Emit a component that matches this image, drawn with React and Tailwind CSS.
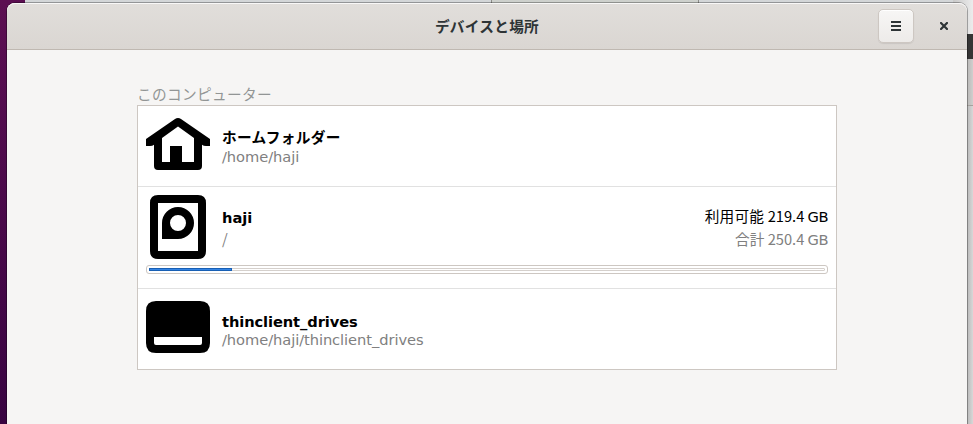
const latin = "font-['DejaVu_Sans','Noto_Sans_CJK_JP',sans-serif]";
const cjk = "font-['Noto_Sans_CJK_JP',sans-serif]";

function HomeIcon() {
  return (
    <svg width="64" height="64" viewBox="0 0 64 64" className="shrink-0">
      <path
        fillRule="evenodd"
        d="M32 4c-1.100 0-2 .3-3 1L0 25v7h4q2.500 0 4-1.200V52q0 4 4 4h40q4 0 4-4V30.800q1.500 1.200 4 1.200h4v-7L35 5c-1-.7-1.900-1-3-1zM32 12.600L48 24v24H36V32H24v16h-8V24z"
      />
    </svg>
  );
}

function DiskIcon() {
  return (
    <svg width="64" height="64" viewBox="0 0 64 64" className="shrink-0">
      <path
        fillRule="evenodd"
        d="M12 0h40q8 0 8 8v48q0 8-8 8H12q-8 0-8-8V8q0-8 8-8zM12 8v48h40V8z"
      />
      <path
        fillRule="evenodd"
        d="M32 12a16 16 0 0 1 0 32H16V28a16 16 0 0 1 16-16zM32 20a8 8 0 1 0 0 16a8 8 0 0 0 0-16z"
      />
    </svg>
  );
}

function DriveIcon() {
  return (
    <svg width="64" height="64" viewBox="0 0 64 64" className="shrink-0">
      <path
        fillRule="evenodd"
        d="M10 4h44q10 0 10 10v32q0 10-10 10H10Q0 56 0 46V14Q0 4 10 4zM8 40v6q0 2 2 2h44q2 0 2-2v-6z"
      />
    </svg>
  );
}

function Backdrop() {
  return (
    <div className="absolute inset-0">
      <div className="absolute inset-y-0 left-0 w-[25px] bg-linear-to-b from-[#5c0f52] to-[#380441]" />
      <div className="absolute top-0 left-[25px] h-[3px] w-[466px] bg-[#d3d6d8]" />
      <div className="absolute top-0 left-[491px] h-[3px] w-[208px] border-x border-[#8d8d89] bg-[#cdd0cc]" />
      <div className="absolute top-0 left-[699px] h-[3px] w-[274px] bg-[#d3d6d8]" />
      <div className="absolute top-0 right-0 h-[34px] w-[20px] bg-linear-to-r from-[#c8c8c8] to-[#ececec]" />
      <div className="absolute top-[34px] right-0 h-[25px] w-[6px] bg-[#353535]" />
      <div className="absolute top-[59px] right-0 h-[46px] w-[6px] bg-linear-to-r from-[#b8b7b6] to-[#d0cfce]" />
      <div className="absolute top-[105px] right-0 h-px w-[6px] bg-[#a5a19d]" />
      <div className="absolute top-[106px] right-0 bottom-0 w-[6px] bg-linear-to-r from-[#b8b8b8] to-[#d8d8d8]" />
    </div>
  );
}

function Header() {
  return (
    <header className="grid h-[47px] grid-cols-[1fr_auto_1fr] items-center rounded-t-[8px] border-b border-[#bfb8b1] bg-linear-to-b from-[#e1dedb] to-[#dad6d2] shadow-[inset_0_1px_#f9f8f8]">
      <div />
      <h1 className={`${cjk} text-[14.667px] leading-[22px] font-bold tracking-[0.28px] text-[#2e3436]`}>
        デバイスと場所
      </h1>
      <div className="flex items-center justify-end gap-[13px] pr-[6px]">
        <button className="flex h-[34px] w-[36px] items-center justify-center rounded-[5px] border border-[#cdc7c2] bg-linear-to-b from-[#f7f6f5] to-[#edebe9] shadow-[0_1px_1px_rgba(0,0,0,0.08),inset_0_1px_#fff]">
          <svg width="10" height="10" viewBox="0 0 10 10" fill="#2e3436" shapeRendering="crispEdges">
            <path d="M0 0h10v2H0zM0 4h10v2H0zM0 8h10v2H0z" />
          </svg>
        </button>
        <button className="flex h-[34px] w-[34px] items-center justify-center">
          <svg width="8" height="8" viewBox="0 0 8 8" stroke="#2e3436" strokeWidth="2.200" strokeLinecap="square">
            <path d="M1 1l6 6M7 1L1 7" />
          </svg>
        </button>
      </div>
    </header>
  );
}

function HomeRow() {
  return (
    <li className="flex h-[81px] items-center gap-3 px-2">
      <HomeIcon />
      <div className="pb-[2px]">
        <div className={`${cjk} leading-[22px] font-bold tracking-[0.36px]`}>ホームフォルダー</div>
        <div className="leading-[17px] tracking-[-0.07px] text-[#808080]">/home/haji</div>
      </div>
    </li>
  );
}

function DiskRow() {
  return (
    <li className="flex h-[102px] flex-col px-2 pt-2">
      <div className="flex h-[64px] items-center gap-3">
        <DiskIcon />
        <div className="flex-1">
          <div className="h-[22px] leading-[25px] font-bold">haji</div>
          <div className={`${cjk} h-[22px] leading-[23px] text-[#808080]`}>/</div>
        </div>
        <div className="text-right">
          <div className="h-[23px] leading-[23px]">
            <span className={`${cjk} tracking-[0.2px]`}>利用可能 </span>
            <span className={cjk}>219.4 </span>
            <span className="tracking-[-0.5px]">GB</span>
          </div>
          <div className="h-[23px] leading-[23px] text-[#808080]">
            <span className={cjk}>合計 </span>
            <span className={cjk}>250.4 </span>
            <span className="tracking-[-0.5px]">GB</span>
          </div>
        </div>
      </div>
      <div className="mt-[6px] h-[9px] rounded-[3px] border border-[#cdc7c2] p-[2px]">
        <div className="h-[3px] rounded-[1px] border border-[#d5d0cc]">
          <div className="-mt-px -ml-px h-[3px] w-[83px] border border-[#185fb4] bg-[#3584e4]" />
        </div>
      </div>
    </li>
  );
}

function DriveRow() {
  return (
    <li className="flex h-[80px] items-center gap-3 px-2">
      <DriveIcon />
      <div className="pt-[4px]">
        <div className="leading-[18px] font-bold tracking-[-0.1px]">thinclient_drives</div>
        <div className="leading-[18px] tracking-[-0.07px] text-[#808080]">/home/haji/thinclient_drives</div>
      </div>
    </li>
  );
}

export default function App() {
  return (
    <div className={`${latin} relative h-[424px] w-[973px] overflow-hidden text-[14.667px] text-black`}>
      <Backdrop />
      <main className="relative mt-[3px] ml-[7px] h-[430px] w-[960px] rounded-t-[8px] bg-[#f6f5f4] shadow-[0_0_0_1px_rgba(0,0,0,0.3)]">
        <Header />
        <section className="px-[130px] pt-[33px]">
          <h2 className={`${cjk} h-[22px] text-[14.667px] leading-[22px] tracking-[0.33px] text-[#929595]`}>
            このコンピューター
          </h2>
          <ul className="divide-y divide-[#e1e1e1] border border-[#cdc7c2] bg-white">
            <HomeRow />
            <DiskRow />
            <DriveRow />
          </ul>
        </section>
      </main>
    </div>
  );
}
